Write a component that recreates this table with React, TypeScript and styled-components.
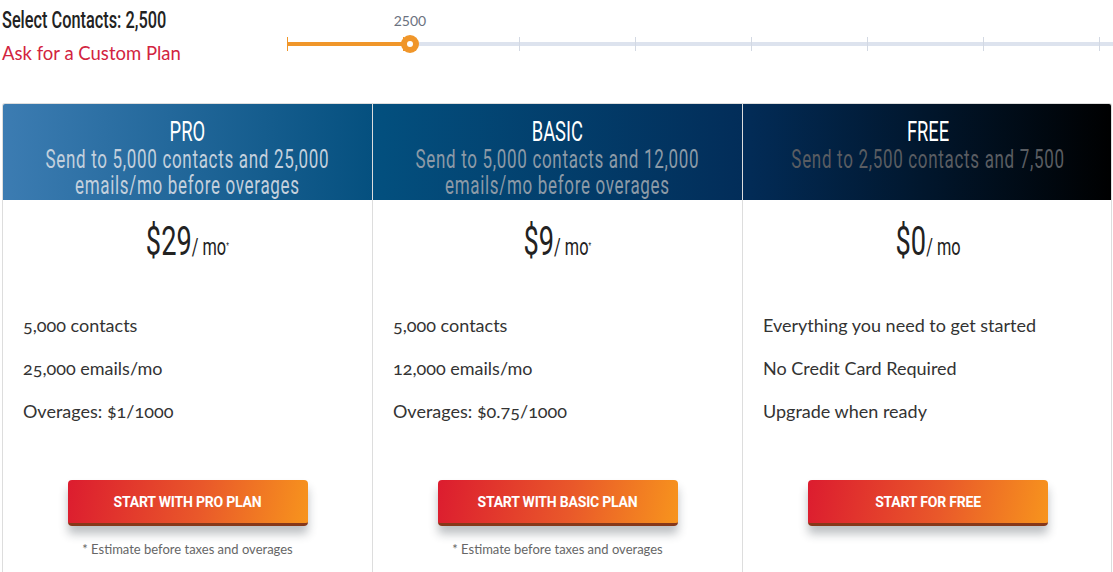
import styled, { createGlobalStyle } from 'styled-components';

const colors = {
  text: '#222222',
  body: '#333333',
  muted: '#666666',
  red: '#d2243f',
  orange: '#f0962a',
  track: '#dde3ee',
  border: '#dddddd',
};

// no Oswald offline: squeeze Roboto to get the tall condensed look
const NARROW = 0.68;
const narrowFont = `Roboto, 'Liberation Sans', sans-serif`;
const bodyFont = `Lato, 'Open Sans', sans-serif`;

const GlobalStyle = createGlobalStyle`
  body {
    margin: 0;
    background: #ffffff;
    font-family: ${bodyFont};
    overflow: hidden;
  }
`;

const Page = styled.div`
  width: 1113px;
  padding: 0 1px 0 2px;
  box-sizing: border-box;
`;

const TopBar = styled.div`
  display: flex;
  height: 103px;
`;

const SelectBlock = styled.div`
  width: 285px;
  padding-top: 5px;
`;

const SelectTitle = styled.div`
  font-family: ${narrowFont};
  font-weight: 500;
  font-size: 24px;
  line-height: 30px;
  color: ${colors.text};
  white-space: nowrap;
  transform: scaleX(${NARROW});
  transform-origin: left center;
`;

const CustomLink = styled.a`
  display: block;
  margin-top: 7px;
  font-size: 18.5px;
  color: ${colors.red};
  text-decoration: none;
`;

const SliderArea = styled.div`
  flex: 1;
  position: relative;
  margin-right: -1px;
`;

const Track = styled.div`
  position: absolute;
  left: 0;
  right: 0;
  top: 42px;
  height: 4px;
  background: ${colors.track};
`;

const Fill = styled.div`
  position: absolute;
  left: 0;
  top: 0;
  bottom: 0;
  background: ${colors.orange};
`;

const Tick = styled.div<{ $active: boolean }>`
  position: absolute;
  top: -5px;
  width: 1px;
  height: 14px;
  background: ${(p) => (p.$active ? colors.orange : '#d3d9e3')};
`;

const Thumb = styled.div`
  position: absolute;
  top: -7px;
  width: 18px;
  height: 18px;
  margin-left: -9px;
  border-radius: 50%;
  background: ${colors.orange};
  display: flex;
  align-items: center;
  justify-content: center;
  &::after {
    content: '';
    width: 6px;
    height: 6px;
    border-radius: 50%;
    background: #ffffff;
  }
`;

const ThumbLabel = styled.div`
  position: absolute;
  top: 12px;
  width: 60px;
  margin-left: -30px;
  text-align: center;
  font-size: 14px;
  color: #6b7280;
`;

const Plans = styled.div`
  display: grid;
  grid-template-columns: 369px 370px 371px;
  border: 1px solid ${colors.border};
  border-bottom: none;
  border-radius: 3px 3px 0 0;
  overflow: hidden;
`;

const Plan = styled.div`
  display: flex;
  flex-direction: column;
  height: 470px;
  overflow: hidden;
  & + & {
    border-left: 1px solid ${colors.border};
  }
`;

const PlanHeader = styled.div<{ $from: string; $to: string }>`
  height: 96px;
  overflow: hidden;
  background: linear-gradient(90deg, ${(p) => p.$from}, ${(p) => p.$to});
  padding-top: 13px;
  box-sizing: border-box;
`;

const NarrowBlock = styled.div`
  width: calc(100% / ${NARROW});
  margin-left: calc((100% - 100% / ${NARROW}) / 2);
  transform: scaleX(${NARROW});
  transform-origin: center;
  text-align: center;
  font-family: ${narrowFont};
  white-space: nowrap;
`;

const PlanName = styled.div`
  color: #ffffff;
  font-size: 27px;
  line-height: 30px;
`;

const PlanSub = styled.div<{ $color: string }>`
  color: ${(p) => p.$color};
  font-size: 25px;
  line-height: 26px;
  letter-spacing: 1px;
`;

const PriceRow = styled(NarrowBlock)`
  padding-top: 18px;
  height: 90px;
  box-sizing: border-box;
  color: ${colors.text};
`;

const Amount = styled.span`
  font-size: 40px;
`;

const Per = styled.span`
  font-size: 24px;
`;

const Star = styled.sup`
  font-size: 9px;
`;

const Features = styled.ul`
  list-style: none;
  margin: 0;
  padding: 14px 20px 0;
  height: 190px;
  box-sizing: border-box;
`;

const Feature = styled.li`
  font-size: 18px;
  line-height: 43px;
  color: ${colors.body};
  font-variant-numeric: oldstyle-nums;
`;

const Action = styled.div`
  display: flex;
  flex-direction: column;
  align-items: center;
`;

const CtaButton = styled.button`
  width: 240px;
  height: 46px;
  border: none;
  border-bottom: 3px solid #86381a;
  border-radius: 4px;
  background: linear-gradient(100deg, #dc1c2f 0%, #e9582a 55%, #f7941d 100%);
  box-shadow: 0 8px 10px rgba(40, 50, 60, 0.3);
  color: #ffffff;
  font-family: Roboto, sans-serif;
  font-weight: 700;
  font-size: 14px;
  letter-spacing: -0.2px;
  text-transform: uppercase;
  cursor: pointer;
`;

const Note = styled.div`
  margin-top: 15px;
  font-size: 13px;
  color: ${colors.muted};
`;

interface PlanData {
  name: string;
  sub: string[];
  subColor: string;
  from: string;
  to: string;
  price: string;
  star: boolean;
  features: string[];
  cta: string;
  note: boolean;
}

const plans: PlanData[] = [
  {
    name: 'PRO',
    sub: ['Send to 5,000 contacts and 25,000', 'emails/mo before overages'],
    subColor: '#c3d0dd',
    from: '#3c7cb2',
    to: '#05507f',
    price: '$29',
    star: true,
    features: ['5,000 contacts', '25,000 emails/mo', 'Overages: $1/1000'],
    cta: 'Start with Pro Plan',
    note: true,
  },
  {
    name: 'BASIC',
    sub: ['Send to 5,000 contacts and 12,000', 'emails/mo before overages'],
    subColor: '#8c9aa7',
    from: '#03507f',
    to: '#022d59',
    price: '$9',
    star: true,
    features: ['5,000 contacts', '12,000 emails/mo', 'Overages: $0.75/1000'],
    cta: 'Start with Basic Plan',
    note: true,
  },
  {
    name: 'FREE',
    sub: ['Send to 2,500 contacts and 7,500'],
    subColor: '#5a5d62',
    from: '#022c58',
    to: '#000000',
    price: '$0',
    star: false,
    features: ['Everything you need to get started', 'No Credit Card Required', 'Upgrade when ready'],
    cta: 'Start for Free',
    note: false,
  },
];

const TICK_GAP = 116;
const THUMB_X = 123;

export default function App() {
  return (
    <Page>
      <GlobalStyle />
      <TopBar>
        <SelectBlock>
          <SelectTitle>Select Contacts: 2,500</SelectTitle>
          <CustomLink href="#">Ask for a Custom Plan</CustomLink>
        </SelectBlock>
        <SliderArea>
          <ThumbLabel style={{ left: THUMB_X }}>2500</ThumbLabel>
          <Track>
            <Fill style={{ width: THUMB_X }} />
            {Array.from({ length: 8 }).map((_, i) => (
              <Tick key={i} $active={i * TICK_GAP < THUMB_X} style={{ left: i * TICK_GAP }} />
            ))}
            <Thumb style={{ left: THUMB_X }} />
          </Track>
        </SliderArea>
      </TopBar>

      <Plans>
        {plans.map((plan) => (
          <Plan key={plan.name}>
            <PlanHeader $from={plan.from} $to={plan.to}>
              <NarrowBlock>
                <PlanName>{plan.name}</PlanName>
                {plan.sub.map((line) => (
                  <PlanSub key={line} $color={plan.subColor}>
                    {line}
                  </PlanSub>
                ))}
              </NarrowBlock>
            </PlanHeader>
            <PriceRow>
              <Amount>{plan.price}</Amount>
              <Per>/ mo</Per>
              {plan.star && <Star>*</Star>}
            </PriceRow>
            <Features>
              {plan.features.map((f) => (
                <Feature key={f}>{f}</Feature>
              ))}
            </Features>
            <Action>
              <CtaButton>{plan.cta}</CtaButton>
              {plan.note && <Note>* Estimate before taxes and overages</Note>}
            </Action>
          </Plan>
        ))}
      </Plans>
    </Page>
  );
}
